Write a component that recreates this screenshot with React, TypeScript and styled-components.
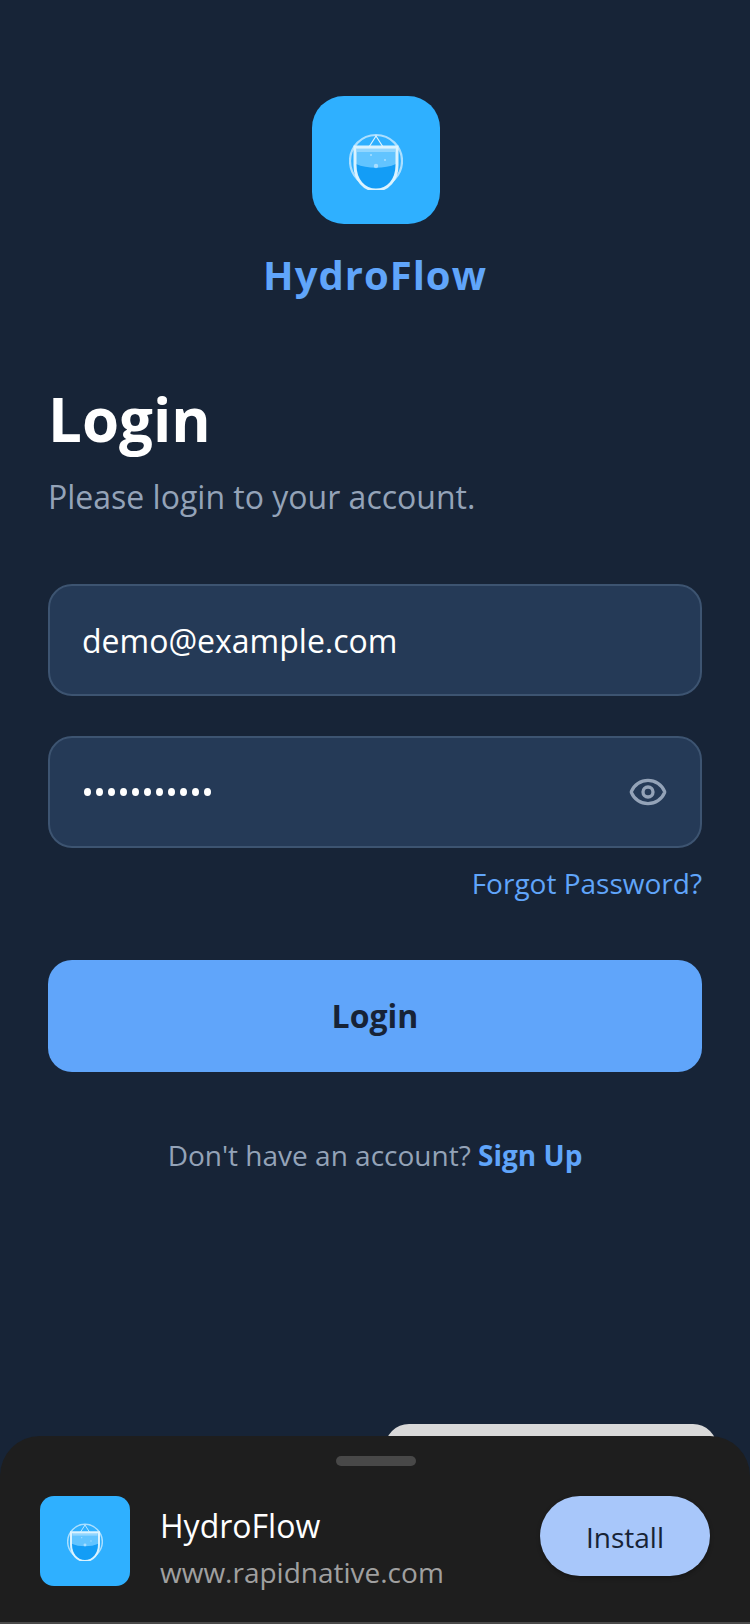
import React from 'react';
import styled, { createGlobalStyle } from 'styled-components';
import { Eye } from 'lucide-react';

const GlobalStyle = createGlobalStyle`
  html, body {
    margin: 0;
    padding: 0;
    background: #172437;
  }
  * {
    box-sizing: border-box;
  }
`;

const Screen = styled.div`
  position: relative;
  width: 750px;
  height: 1624px;
  overflow: hidden;
  background: #172437;
  font-family: 'Open Sans', sans-serif;
  padding: 96px 48px 0;
`;

const Brand = styled.div`
  display: flex;
  flex-direction: column;
  align-items: center;
  padding-left: 2px;
`;

const LogoTile = styled.div<{ $size: number; $radius: number }>`
  width: ${({ $size }) => $size}px;
  height: ${({ $size }) => $size}px;
  border-radius: ${({ $radius }) => $radius}px;
  background: #2fb0ff;
  display: flex;
  align-items: center;
  justify-content: center;
  flex-shrink: 0;
`;

const BrandName = styled.div`
  margin: 21px 2px 0 0;
  font-size: 40px;
  line-height: 60px;
  font-weight: 700;
  letter-spacing: 1px;
  color: #60a5fa;
`;

const Heading = styled.h1`
  margin: 74px 0 0;
  font-size: 60px;
  line-height: 80px;
  font-weight: 700;
  color: #ffffff;
`;

const Subtitle = styled.p`
  margin: 14px 0 0;
  font-size: 32px;
  line-height: 48px;
  color: #94a3b8;
`;

const Form = styled.div`
  margin-top: 63px;
  display: flex;
  flex-direction: column;
  gap: 40px;
`;

const Field = styled.div`
  height: 112px;
  border-radius: 24px;
  border: 2px solid #3d5471;
  background: #253a57;
  padding: 0 32px;
  display: flex;
  align-items: center;
  justify-content: space-between;
  font-size: 32px;
  color: #ffffff;
`;

const Dots = styled.div`
  display: flex;
  gap: 5px;
  margin-left: 2px;
`;

const Dot = styled.span`
  width: 7px;
  height: 8px;
  border-radius: 50%;
  background: #ffffff;
`;

const EyeIcon = styled(Eye)`
  color: #94a3b8;
`;

const ForgotRow = styled.div`
  margin-top: 15px;
  text-align: right;
  font-size: 28px;
  line-height: 40px;
  color: #60a5fa;
`;

const LoginButton = styled.div`
  margin-top: 57px;
  height: 112px;
  border-radius: 24px;
  background: #60a5fa;
  color: #172336;
  font-size: 32px;
  font-weight: 700;
  padding-bottom: 1px;
  display: flex;
  align-items: center;
  justify-content: center;
`;

const SignUpRow = styled.div`
  margin-top: 63px;
  text-align: center;
  font-size: 28px;
  line-height: 40px;
  color: #94a3b8;
`;

const SignUpLink = styled.span`
  color: #60a5fa;
  font-weight: 700;
`;

const PeekButton = styled.div`
  position: absolute;
  left: 385px;
  top: 1424px;
  width: 332px;
  height: 80px;
  border-radius: 24px;
  background: #d9d9d9;
`;

const Sheet = styled.div`
  position: absolute;
  left: 0;
  right: 0;
  top: 1436px;
  height: 186px;
  border-radius: 40px 40px 0 0;
  background: #1e1e1e;
  padding: 20px 40px 0;
`;

const Handle = styled.div`
  width: 80px;
  height: 10px;
  border-radius: 5px;
  background: #484848;
  margin: 0 auto 30px;
  transform: translateX(1px);
`;

const SheetRow = styled.div`
  display: flex;
  align-items: flex-start;
  gap: 30px;
`;

const AppInfo = styled.div`
  flex: 1;
  padding-top: 8px;
`;

const AppName = styled.div`
  font-size: 32px;
  line-height: 44px;
  color: #ffffff;
`;

const AppUrl = styled.div`
  margin-top: 2px;
  font-size: 28px;
  line-height: 44px;
  color: #a0a0a0;
`;

const InstallButton = styled.div`
  width: 170px;
  height: 80px;
  border-radius: 40px;
  background: #a8c7fa;
  color: #172336;
  font-size: 28px;
  padding-top: 2px;
  display: flex;
  align-items: center;
  justify-content: center;
  box-shadow: 0 2px 4px rgba(0, 0, 0, 0.3);
`;

const BottomLine = styled.div`
  position: absolute;
  left: 0;
  right: 0;
  bottom: 0;
  height: 2px;
  background: #4a4a4a;
`;

const CUP = 'M6 14 H48 V32 C48 47 39 57 27 57 C15 57 6 47 6 32 Z';

const LogoMark = ({ width }: { width: number }) => (
  <svg width={width} height={(width * 60) / 54} viewBox="0 -3 54 60" fill="none">
    <circle cx="27" cy="28" r="26" stroke="#ffffff" strokeOpacity="0.6" strokeWidth="2.2" />
    <path d="M20 14 L27 3 L34 14" stroke="#ffffff" strokeOpacity="0.85" strokeWidth="1.2" />
    <path d={CUP} fill="#62c4ff" />
    <path d="M7 31 C18 36 36 36 47 31 V33 C47 47 38 56 27 56 C16 56 7 47 7 33 Z" fill="#139df6" />
    <path d={CUP} stroke="#e2f5ff" strokeOpacity="0.95" strokeWidth="3" />
    <path d="M8 17 H46" stroke="#ffffff" strokeOpacity="0.3" strokeWidth="4" />
    <circle cx="27" cy="33" r="2.2" fill="#ffffff" fillOpacity="0.45" />
    <circle cx="36" cy="27" r="1" fill="#ffffff" fillOpacity="0.45" />
    <circle cx="22" cy="22" r="1" fill="#ffffff" fillOpacity="0.45" />
  </svg>
);

export default function App() {
  return (
    <Screen>
      <GlobalStyle />
      <Brand>
        <LogoTile $size={128} $radius={32}>
          <LogoMark width={54} />
        </LogoTile>
        <BrandName>HydroFlow</BrandName>
      </Brand>
      <Heading>Login</Heading>
      <Subtitle>Please login to your account.</Subtitle>
      <Form>
        <Field>demo@example.com</Field>
        <Field>
          <Dots>
            {Array.from({ length: 11 }).map((_, i) => (
              <Dot key={i} />
            ))}
          </Dots>
          <EyeIcon size={40} strokeWidth={2} />
        </Field>
      </Form>
      <ForgotRow>Forgot Password?</ForgotRow>
      <LoginButton>Login</LoginButton>
      <SignUpRow>
        Don't have an account? <SignUpLink>Sign Up</SignUpLink>
      </SignUpRow>
      <PeekButton />
      <Sheet>
        <Handle />
        <SheetRow>
          <LogoTile $size={90} $radius={14}>
            <LogoMark width={36} />
          </LogoTile>
          <AppInfo>
            <AppName>HydroFlow</AppName>
            <AppUrl>www.rapidnative.com</AppUrl>
          </AppInfo>
          <InstallButton>Install</InstallButton>
        </SheetRow>
      </Sheet>
      <BottomLine />
    </Screen>
  );
}
